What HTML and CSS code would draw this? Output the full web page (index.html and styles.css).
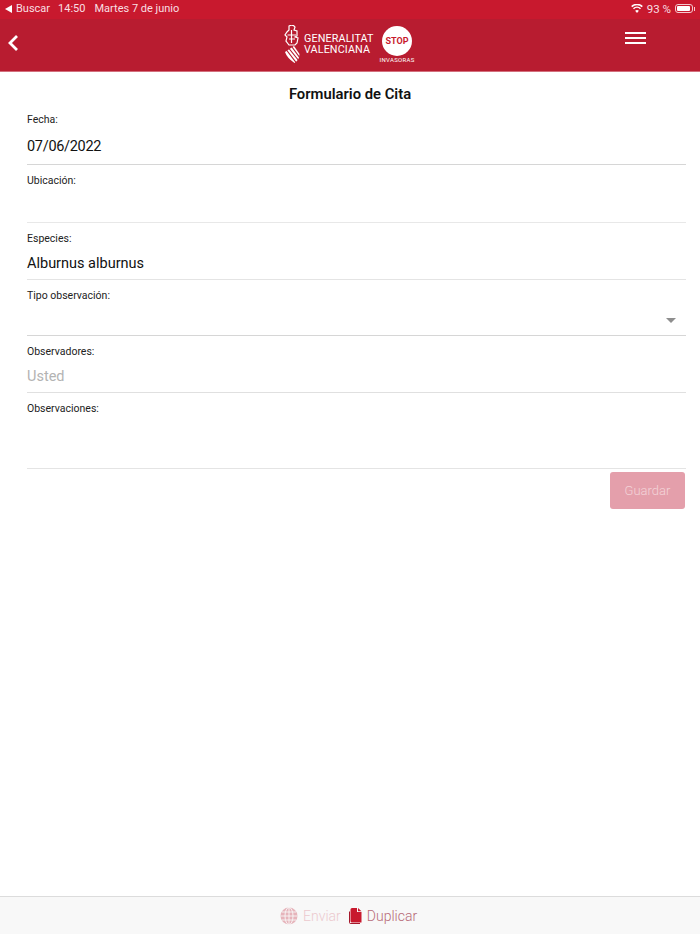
FILE: index.html
```html
<!DOCTYPE html>
<html lang="es">
<head>
    <meta charset="UTF-8">
    <meta name="viewport" content="width=device-width, initial-scale=1.0">
    <title>Formulario de Cita</title>
    <link rel="stylesheet" href="styles.css">
</head>
<body>
    <div class="app">
        <div class="statusbar">
            <div class="status-left">
                <span class="back-tri"></span>
                <span class="status-app">Buscar</span>
                <span class="status-time">14:50</span>
                <span>Martes 7 de junio</span>
            </div>
            <div class="status-right">
                <svg class="wifi" width="12" height="9" viewBox="0 0 13 10">
                    <path d="M6.5 10 L4.4 7.6 A3.2 3.2 0 0 1 8.6 7.6 Z" fill="#fff"/>
                    <path d="M2.6 5.2 A5.6 5.6 0 0 1 10.4 5.2" fill="none" stroke="#fff" stroke-width="1.7"/>
                    <path d="M0.6 2.9 A8.4 8.4 0 0 1 12.4 2.9" fill="none" stroke="#fff" stroke-width="1.7"/>
                </svg>
                <span class="battery-text">93 %</span>
                <span class="battery"><span class="battery-level"></span></span>
                <span class="battery-tip"></span>
            </div>
        </div>

        <header class="navbar">
            <svg class="nav-back" width="12" height="18" viewBox="0 0 12 18">
                <path d="M10 2 L3 9 L10 16" fill="none" stroke="#fff" stroke-width="2.8"/>
            </svg>
            <div class="logo">
                <svg class="crest" width="16" height="38" viewBox="0 0 16 38">
                    <path d="M5 1 Q9 -1 11 2 L10 5 L13 6 L13 11 L11 12 L14 13 L13 18 L11 20 L5 20 L2 16 L3 12 L1 10 L3 7 L5 5 Z" fill="none" stroke="#fff" stroke-width="1.2"/>
                    <path d="M7.5 5 V18 M3.5 10 H12 M5 14 H11" stroke="#fff" stroke-width="1.2"/>
                    <path d="M1 27 L10 21 L15.5 29 Q15.5 35 10.5 38 Q3 33 1 27 Z" fill="#fff"/>
                    <path d="M2.5 25 L12.5 38 M5 23.5 L15 36 M8 22 L16 33" stroke="#b81c30" stroke-width="1.2"/>
                </svg>
                <div class="logo-name">
                    <span>GENERALITAT</span>
                    <span>VALENCIANA</span>
                </div>
                <div class="logo-stop">
                    <div class="stop-circle">STOP</div>
                    <div class="stop-sub">INVASORAS</div>
                </div>
            </div>
            <div class="menu-btn">
                <span></span>
                <span></span>
                <span></span>
            </div>
        </header>

        <main class="content">
            <h1 class="page-title">Formulario de Cita</h1>

            <div class="field field-date">
                <label>Fecha:</label>
                <div class="value">07/06/2022</div>
            </div>
            <div class="field field-location">
                <label>Ubicación:</label>
                <div class="value"></div>
            </div>
            <div class="field field-species">
                <label>Especies:</label>
                <div class="value">Alburnus alburnus</div>
            </div>
            <div class="field field-type">
                <label>Tipo observación:</label>
                <div class="value select-value"><span class="caret"></span></div>
            </div>
            <div class="field field-observers">
                <label>Observadores:</label>
                <div class="value placeholder">Usted</div>
            </div>
            <div class="field field-notes">
                <label>Observaciones:</label>
                <div class="value notes-value"></div>
            </div>

            <div class="form-actions">
                <button class="save-btn" disabled>Guardar</button>
            </div>
        </main>

        <footer class="toolbar">
            <div class="tool tool-send">
                <svg width="18" height="18" viewBox="0 0 18 18">
                    <circle cx="9" cy="9" r="8.5" fill="#e6b4bb"/>
                    <g fill="none" stroke="#f8f8f8" stroke-width="0.9">
                        <ellipse cx="9" cy="9" rx="4" ry="8.5"/>
                        <path d="M9 0.5 V17.5 M0.5 9 H17.5 M1.8 5 H16.2 M1.8 13 H16.2"/>
                    </g>
                </svg>
                <span>Enviar</span>
            </div>
            <div class="tool tool-copy">
                <svg width="13" height="16" viewBox="0 0 13 16">
                    <path d="M1 15 V3 L0 4 V14 Q0 16 2 16 H11 V15 Z" fill="#a5182c"/>
                    <path d="M1.5 1.5 Q1.5 0 3 0 H8 V4 H12.5 V14.5 H3 Q1.5 14.5 1.5 13 Z" fill="#c8192e"/>
                    <path d="M9 0 L12.5 3.2 H9 Z" fill="#c8192e"/>
                </svg>
                <span>Duplicar</span>
            </div>
        </footer>
    </div>
</body>
</html>
```

FILE: styles.css
```css
* {
    box-sizing: border-box;
}
html, body {
    margin: 0;
    padding: 0;
}
body {
    font-family: Roboto, "Liberation Sans", sans-serif;
    background-color: #ffffff;
    color: #111;
}
.app {
    width: 700px;
    height: 934px;
    display: flex;
    flex-direction: column;
    overflow: hidden;
}

/* status bar */
.statusbar {
    height: 19px;
    padding: 0 5px 2px 5px;
    background-color: #c8192e;
    color: #f8dfe2;
    font-size: 11px;
    display: flex;
    align-items: center;
    justify-content: space-between;
}
.status-left,
.status-right {
    display: flex;
    align-items: center;
}
.back-tri {
    width: 0;
    height: 0;
    margin-right: 4px;
    border-top: 4px solid transparent;
    border-bottom: 4px solid transparent;
    border-right: 7px solid #fff;
}
.status-app {
    margin-right: 8px;
}
.status-time {
    margin-right: 9px;
}
.wifi {
    margin-right: 4px;
}
.battery-text {
    margin-right: 4px;
    font-size: 11.5px;
}
.battery {
    width: 18px;
    height: 9px;
    padding: 1px;
    border: 1px solid #f4c9cf;
    border-radius: 3px;
    display: block;
}
.battery-level {
    display: block;
    width: 93%;
    height: 100%;
    background-color: #fff;
    border-radius: 1px;
}
.battery-tip {
    width: 1px;
    height: 4px;
    margin-left: 1px;
    background-color: #f4c9cf;
}

/* nav */
.navbar {
    height: 53px;
    padding: 0 54px 0 7px;
    background-color: #b81c30;
    border-bottom: 1px solid #d3707d;
    display: flex;
}
.nav-back {
    margin-top: 15px;
}
.logo {
    margin: 6px 0 0 265px;
    display: flex;
    color: #fff;
}
.crest {
    flex-shrink: 0;
}
.logo-name {
    margin: 8px 0 0 4px;
    font-size: 10.8px;
    line-height: 11px;
    letter-spacing: 0.1px;
    display: flex;
    flex-direction: column;
    white-space: nowrap;
}
.logo-stop {
    margin-left: 6px;
    display: flex;
    flex-direction: column;
    align-items: center;
}
.stop-circle {
    width: 30px;
    height: 30px;
    margin-top: 1px;
    border-radius: 50%;
    background-color: #fff;
    color: #c8192e;
    font-size: 9px;
    font-weight: 700;
    line-height: 30px;
    text-align: center;
}
.stop-sub {
    font-size: 6px;
    line-height: 8px;
    letter-spacing: 0.3px;
}
.menu-btn {
    width: 21px;
    margin: 13px 0 0 auto;
    display: flex;
    flex-direction: column;
    gap: 3px;
}
.menu-btn span {
    display: block;
    height: 2px;
    background-color: #fff;
}

/* form */
.content {
    flex: 1;
    padding: 0 14px 0 27px;
}
.page-title {
    margin: 13px 0 0 -27px;
    width: 700px;
    font-size: 14.8px;
    line-height: 18px;
    font-weight: 600;
    text-align: center;
}
.field {
    border-bottom: 1px solid #d6d6d6;
}
.field label {
    display: block;
    font-size: 10.5px;
    line-height: 14px;
    color: #222;
}
.field-date {
    margin-top: 10px;
}
.field-location,
.field-species,
.field-type,
.field-observers,
.field-notes {
    margin-top: 9px;
}
.value {
    height: 36px;
    padding-top: 8px;
    font-size: 14.5px;
    line-height: 20px;
}
.field-date .value {
    height: 37px;
    padding-top: 10px;
    letter-spacing: -0.3px;
}
.field-location {
    border-bottom-color: #e8e8e8;
}
.field-location .value {
    height: 34px;
}
.field-species {
    border-bottom-color: #e4e4e4;
}
.field-species .value {
    height: 33px;
}
.field-type .value {
    height: 32px;
}
.field-observers {
    border-bottom-color: #e0e0e0;
}
.field-observers .value {
    height: 33px;
}
.field-notes {
    border-bottom-color: #e4e4e4;
}
.notes-value {
    height: 52px;
}
.placeholder {
    color: #b3b3b3;
}
.select-value {
    position: relative;
}
.caret {
    position: absolute;
    right: 10px;
    top: 15px;
    width: 0;
    height: 0;
    border-left: 5px solid transparent;
    border-right: 5px solid transparent;
    border-top: 5px solid #8e8e8e;
}
.form-actions {
    margin-top: 3px;
    padding-right: 1px;
    display: flex;
    justify-content: flex-end;
}
.save-btn {
    width: 75px;
    height: 37px;
    padding: 0;
    border: none;
    border-radius: 3px;
    background-color: #e49fab;
    color: #f3d3d8;
    font-family: inherit;
    font-size: 13px;
    font-weight: 300;
}

/* bottom toolbar */
.toolbar {
    height: 38px;
    padding-left: 280px;
    background-color: #f8f8f8;
    border-top: 1px solid #dcdcdc;
    display: flex;
    align-items: center;
    gap: 8px;
    font-size: 14px;
    font-weight: 300;
}
.tool {
    display: flex;
    align-items: center;
    gap: 5px;
}
.tool-send {
    color: #ecc9ce;
}
.tool-copy {
    color: #b76a77;
}
```
